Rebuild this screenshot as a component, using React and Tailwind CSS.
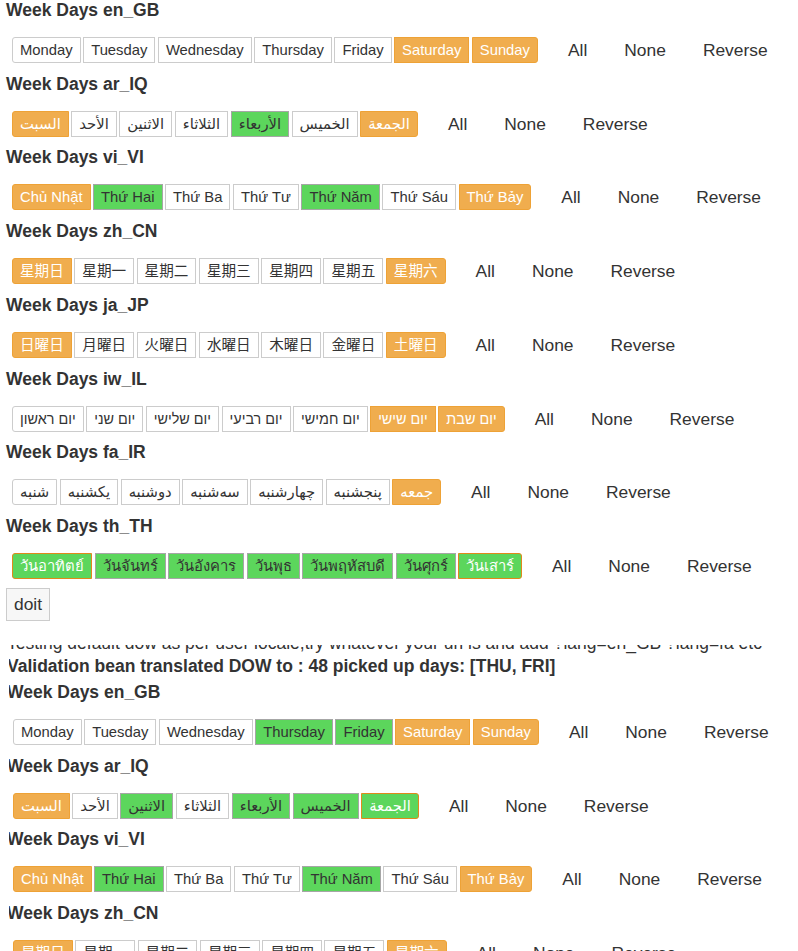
import React from 'react'

// day button looks
const LOOK = {
  w: 'bg-white border-[#cccccc] text-[#333333]',
  o: 'bg-[#f0ad4e] border-[#eea236] text-white',
  g: 'bg-[#5cd65c] border-[#a6a6a6] text-[#333333]',
  ge: 'bg-[#5cd65c] border-[#e0891a] text-white',
}

const TOP = [
  {
    locale: 'en_GB',
    days: [['Monday', 'w'], ['Tuesday', 'w'], ['Wednesday', 'w'], ['Thursday', 'w'], ['Friday', 'w'], ['Saturday', 'o'], ['Sunday', 'o']],
  },
  {
    locale: 'ar_IQ',
    size: 'ar',
    days: [['السبت', 'o'], ['الأحد', 'w'], ['الاثنين', 'w'], ['الثلاثاء', 'w'], ['الأربعاء', 'g'], ['الخميس', 'w'], ['الجمعة', 'o']],
  },
  {
    locale: 'vi_VI',
    days: [['Chủ Nhật', 'o'], ['Thứ Hai', 'g'], ['Thứ Ba', 'w'], ['Thứ Tư', 'w'], ['Thứ Năm', 'g'], ['Thứ Sáu', 'w'], ['Thứ Bảy', 'o']],
  },
  {
    locale: 'zh_CN',
    size: 'sc',
    days: [['星期日', 'o'], ['星期一', 'w'], ['星期二', 'w'], ['星期三', 'w'], ['星期四', 'w'], ['星期五', 'w'], ['星期六', 'o']],
  },
  {
    locale: 'ja_JP',
    size: 'jp',
    days: [['日曜日', 'o'], ['月曜日', 'w'], ['火曜日', 'w'], ['水曜日', 'w'], ['木曜日', 'w'], ['金曜日', 'w'], ['土曜日', 'o']],
  },
  {
    locale: 'iw_IL',
    size: 'he',
    days: [['יום ראשון', 'w'], ['יום שני', 'w'], ['יום שלישי', 'w'], ['יום רביעי', 'w'], ['יום חמישי', 'w'], ['יום שישי', 'o'], ['יום שבת', 'o']],
  },
  {
    locale: 'fa_IR',
    size: 'ar',
    days: [['شنبه', 'w'], ['یکشنبه', 'w'], ['دوشنبه', 'w'], ['سه‌شنبه', 'w'], ['چهارشنبه', 'w'], ['پنجشنبه', 'w'], ['جمعه', 'o']],
  },
  {
    locale: 'th_TH',
    days: [['วันอาทิตย์', 'ge'], ['วันจันทร์', 'g'], ['วันอังคาร', 'g'], ['วันพุธ', 'g'], ['วันพฤหัสบดี', 'g'], ['วันศุกร์', 'g'], ['วันเสาร์', 'ge']],
  },
]

const BOTTOM = [
  {
    locale: 'en_GB',
    days: [['Monday', 'w'], ['Tuesday', 'w'], ['Wednesday', 'w'], ['Thursday', 'g'], ['Friday', 'g'], ['Saturday', 'o'], ['Sunday', 'o']],
  },
  {
    locale: 'ar_IQ',
    size: 'ar',
    days: [['السبت', 'o'], ['الأحد', 'w'], ['الاثنين', 'g'], ['الثلاثاء', 'w'], ['الأربعاء', 'g'], ['الخميس', 'g'], ['الجمعة', 'ge']],
  },
  {
    locale: 'vi_VI',
    days: [['Chủ Nhật', 'o'], ['Thứ Hai', 'g'], ['Thứ Ba', 'w'], ['Thứ Tư', 'w'], ['Thứ Năm', 'g'], ['Thứ Sáu', 'w'], ['Thứ Bảy', 'o']],
  },
  {
    locale: 'zh_CN',
    size: 'sc',
    days: [['星期日', 'o'], ['星期一', 'w'], ['星期二', 'w'], ['星期三', 'w'], ['星期四', 'w'], ['星期五', 'w'], ['星期六', 'o']],
  },
]

const ROW_FONT = {
  jp: "text-[14.6px] font-['Liberation_Sans','Noto_Sans_CJK_JP',sans-serif]",
  sc: 'text-[14.6px]',
  he: 'text-[14.4px]',
  ar: 'text-[14.8px]',
}

function WeekDays({ locale, days, size }) {
  return (
    <div>
      <div className="h-[20px] leading-[20px] text-[17.5px] font-bold text-[#333333] whitespace-nowrap">
        Week Days {locale}
      </div>
      <div className="mt-[17px] ml-[6px] flex items-center h-[26px]">
        <div className={`flex gap-[2.5px] ${ROW_FONT[size] || 'text-[14.8px]'}`}>
          {days.map(([label, look], i) => (
            <div
              key={label}
              className={`h-[26px] px-[7px] border leading-[24px] whitespace-nowrap ${LOOK[look]} ${
                i === 0 ? 'rounded-l-[3px]' : ''
              } ${i === days.length - 1 ? 'rounded-r-[3px]' : ''}`}
            >
              {label}
            </div>
          ))}
        </div>
        <div className="ml-[30px] flex gap-[37px] text-[17.4px] leading-[20px] text-[#333333]">
          <span>All</span>
          <span>None</span>
          <span>Reverse</span>
        </div>
      </div>
    </div>
  )
}

export default function App() {
  return (
    <div className="h-[951px] overflow-hidden bg-white font-['Liberation_Sans','DejaVu_Sans','Noto_Sans_CJK_SC',sans-serif]">
      <div className="pl-[6px]">
        <div className="flex flex-col gap-[10.71px]">
          {TOP.map((b) => (
            <WeekDays key={b.locale} {...b} />
          ))}
        </div>
        <button className="block mt-[9px] h-[33px] px-[7px] border border-[#cccccc] bg-[#f7f7f7] text-[17.4px] leading-[20px] text-[#333333]">
          doit
        </button>
      </div>

      {/* second capture, scrolled and clipped */}
      <div className="mt-[24px] ml-[9px] h-[306px] overflow-hidden">
        <div className="-mt-[12px] -ml-[8px] pl-[6px]">
          <div className="h-[20px] leading-[20px] text-[17.5px] text-[#333333] whitespace-nowrap">
            Testing default dow as per user locale,try whatever your url is and add ?lang=en_GB ?lang=fa etc
          </div>
          <div className="mt-[3px] h-[20px] leading-[20px] text-[17.5px] font-bold text-[#333333] whitespace-nowrap">
            Validation bean translated DOW to : 48 picked up days: [THU, FRI]
          </div>
          <div className="mt-[6px] flex flex-col gap-[10.71px]">
            {BOTTOM.map((b) => (
              <WeekDays key={b.locale} {...b} />
            ))}
          </div>
        </div>
      </div>
    </div>
  )
}
